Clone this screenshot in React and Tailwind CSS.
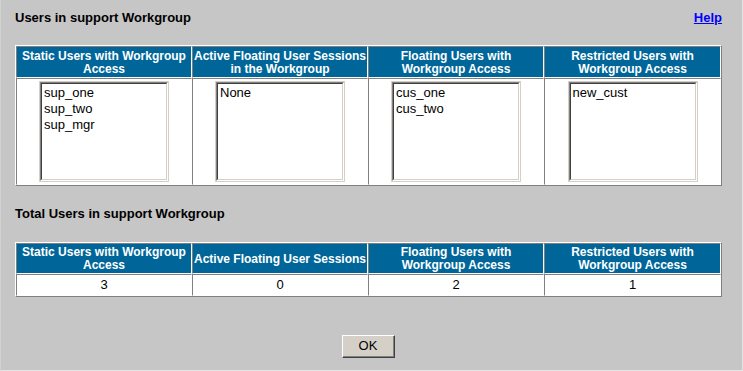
import React from "react";

const font = { fontFamily: '"Liberation Sans", Arial, sans-serif' };

function ListBox({ items }) {
  return (
    <div className="mx-auto w-[130px] h-[101px] border border-[#d4d0c8]">
      <div className="h-full border-t border-l border-b border-r border-t-[#808080] border-l-[#808080] border-b-white border-r-white">
        <div className="h-full bg-white text-left border-t border-l border-b border-r border-t-[#404040] border-l-[#404040] border-b-[#d4d0c8] border-r-[#d4d0c8] pl-[2px] pt-[1px] text-[13px] leading-[16px] text-black">
          {items.map((it) => (
            <div key={it}>{it}</div>
          ))}
        </div>
      </div>
    </div>
  );
}

const headCell =
  "bg-[#006699] text-white font-bold text-[12px] leading-[13px] text-center align-middle whitespace-nowrap border-t border-l border-b border-r border-t-[#808080] border-l-[#808080] border-b-white border-r-white p-0 pt-[1px]";
const bodyCell =
  "bg-white text-black text-[13px] leading-[16px] text-center align-middle border-t border-l border-b border-r border-t-[#808080] border-l-[#808080] border-b-white border-r-white p-0";

function Table({ headers, children, headH }) {
  return (
    <table className="border-separate border-spacing-0 w-[707px] border-t border-l border-b border-r border-t-white border-l-white border-b-[#808080] border-r-[#808080] table-fixed">
      <colgroup>
        <col className="w-[176px]" />
        <col className="w-[176px]" />
        <col className="w-[176px]" />
        <col className="w-[177px]" />
      </colgroup>
      <thead>
        <tr className={headH}>
          {headers.map((h, i) => (
            <th key={i} className={headCell}>
              {h.map((line, j) => (
                <div key={j}>{line}</div>
              ))}
            </th>
          ))}
        </tr>
      </thead>
      <tbody>{children}</tbody>
    </table>
  );
}

export default function App() {
  const h1 = [
    ["Static Users with Workgroup", "Access"],
    ["Active Floating User Sessions", "in the Workgroup"],
    ["Floating Users with", "Workgroup Access"],
    ["Restricted Users with", "Workgroup Access"],
  ];
  const h2 = [
    ["Static Users with Workgroup", "Access"],
    ["Active Floating User Sessions"],
    ["Floating Users with", "Workgroup Access"],
    ["Restricted Users with", "Workgroup Access"],
  ];
  return (
    <div
      style={font}
      className="w-[743px] h-[371px] bg-[#c6c6c6] border-l border-l-[#d2d2d2] border-r border-r-[#e4e4e4] border-b border-b-[#e4e4e4] overflow-hidden"
    >
      <div className="pl-[14px] pt-[10px]">
        <div className="w-[707px] flex justify-between text-[13px] leading-[16px] font-bold">
          <span className="text-black">Users in support Workgroup</span>
          <a href="#" className="text-[#0000ff] underline">
            Help
          </a>
        </div>

        <div className="mt-[19px]">
          <Table headers={h1} headH="h-[32px]">
            <tr className="h-[107px]">
              <td className={bodyCell}>
                <ListBox items={["sup_one", "sup_two", "sup_mgr"]} />
              </td>
              <td className={bodyCell}>
                <ListBox items={["None"]} />
              </td>
              <td className={bodyCell}>
                <ListBox items={["cus_one", "cus_two"]} />
              </td>
              <td className={bodyCell}>
                <ListBox items={["new_cust"]} />
              </td>
            </tr>
          </Table>
        </div>

        <div className="mt-[20px] text-[13px] leading-[16px] font-bold text-black">
          Total Users in support Workgroup
        </div>

        <div className="mt-[20px]">
          <Table headers={h2} headH="h-[31px]">
            <tr className="h-[22px]">
              <td className={bodyCell}>3</td>
              <td className={bodyCell}>0</td>
              <td className={bodyCell}>2</td>
              <td className={bodyCell}>1</td>
            </tr>
          </Table>
        </div>

        <div className="w-[707px] flex justify-center mt-[38px]">
          <button className="w-[53px] h-[23px] bg-[#d4d0c8] border-t border-l border-b border-r border-t-white border-l-white border-b-[#404040] border-r-[#404040] p-0">
            <div className="h-full flex items-center justify-center border-b border-r border-b-[#808080] border-r-[#808080] text-[13px] text-black">
              OK
            </div>
          </button>
        </div>
      </div>
    </div>
  );
}
